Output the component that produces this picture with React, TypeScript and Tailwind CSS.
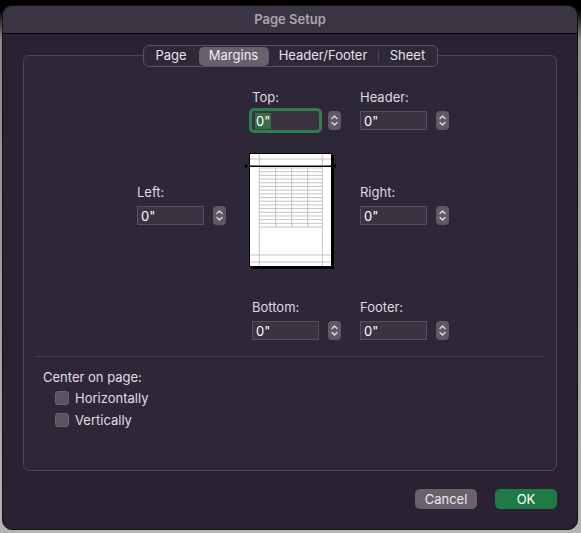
import React from "react";

const font = { fontFamily: "Inter, 'Noto Sans', 'Liberation Sans', sans-serif" };

function Stepper() {
  return (
    <div className="ml-[9px] w-[13px] h-[19px] rounded-[4px] bg-[#5e5965] flex items-center justify-center">
      <svg width="13" height="19" viewBox="0 0 13 19">
        <path d="M4 7.5 L6.5 5 L9 7.5" fill="none" stroke="#e4e0e8" strokeWidth="1.3" strokeLinecap="round" strokeLinejoin="round" />
        <path d="M4 11.5 L6.5 14 L9 11.5" fill="none" stroke="#e4e0e8" strokeWidth="1.3" strokeLinecap="round" strokeLinejoin="round" />
      </svg>
    </div>
  );
}

function Field({ label, focused = false }: { label: string; focused?: boolean }) {
  return (
    <div className="flex flex-col">
      <div className="text-[13px] leading-[16px] text-[#dedae2]">{label}</div>
      <div className="mt-[6px] flex items-center">
        {focused ? (
          <div className="w-[67px] h-[19px] bg-[#3a3342] rounded-[2px] shadow-[0_0_0_3px_#2e7f4d] flex items-center pl-[3px]">
            <span className="bg-[#3c6a4a] text-white text-[13px] leading-[16px] px-[1px]">0"</span>
          </div>
        ) : (
          <div className="w-[67px] h-[19px] bg-[#3a3342] border border-[#56505d] flex items-center pl-[3px]">
            <span className="text-white text-[13px] leading-[16px]">0"</span>
          </div>
        )}
        <Stepper />
      </div>
    </div>
  );
}

function Preview() {
  const rows = Array.from({ length: 17 }, (_, i) => 15 + i * 3.69);
  return (
    <svg width="86" height="117" viewBox="0 0 86 117" className="-ml-[3px] overflow-visible">
      <rect x="2" y="2" width="83" height="114" fill="#000" />
      <rect x="0.5" y="0.5" width="82" height="113" fill="#fff" stroke="#000" strokeWidth="1" />
      <g stroke="#bdbdbd" strokeWidth="0.9">
        <line x1="10.3" y1="1" x2="10.3" y2="113" />
        <line x1="73.3" y1="1" x2="73.3" y2="113" />
        <line x1="1" y1="6" x2="82" y2="6" />
        <line x1="1" y1="102" x2="82" y2="102" />
        <line x1="1" y1="109" x2="82" y2="109" />
        {rows.map((y, i) => (
          <line key={i} x1="10.3" y1={y} x2="73.3" y2={y} />
        ))}
        <line x1="26.7" y1="15" x2="26.7" y2="74" />
        <line x1="42.7" y1="15" x2="42.7" y2="74" />
        <line x1="58.7" y1="15" x2="58.7" y2="74" />
      </g>
      <line x1="0" y1="13.3" x2="83" y2="13.3" stroke="#000" strokeWidth="1.4" />
      <polygon points="-4,10.8 -1,13.3 -4,15.8" fill="#000" />
      <polygon points="87,10.8 84,13.3 87,15.8" fill="#000" />
    </svg>
  );
}

function Checkbox({ label }: { label: string }) {
  return (
    <div className="h-[22px] flex items-center pl-[12px]">
      <div className="w-[14px] h-[14px] rounded-[3px] bg-[#5a5460] border border-[#6a6470]" />
      <span className="ml-[6px] text-[13px] leading-[16px] text-[#e2dee6]">{label}</span>
    </div>
  );
}

export default function App() {
  return (
    <div
      className="w-[581px] h-[533px] bg-[linear-gradient(to_bottom,#000_0px,#000_10px,#8c8c8c_40px,#b4b4b4_100%)] pt-[5px] pl-[2px]"
      style={font}
    >
      <div className="w-[576px] h-[525px] rounded-[10px] overflow-hidden bg-[#2a2232] border border-[#111] flex flex-col">
        <div className="h-[28px] shrink-0 bg-[#3b3543] border-b border-black flex items-center justify-center pb-[2px]">
          <span className="text-[13px] font-semibold text-[#aaa5ae] leading-[16px]">Page Setup</span>
        </div>
        <div className="flex-1 flex flex-col px-[20px] pt-[21px]">
          <div className="h-[416px] border border-[#4b4553] rounded-[6px] bg-[#2e2737] flex flex-col">
            <div className="-mt-[11px] mx-auto flex items-center h-[22px] w-[295px] rounded-[6px] border border-[#59535f] bg-[#2f2838]">
              <div className="w-[55px] h-full flex items-center justify-center text-[13px] text-[#e6e2ea]">Page</div>
              <div className="w-[70px] h-[19px] rounded-[5px] bg-[#67616d] flex items-center justify-center text-[13px] text-[#f0ecf4]">Margins</div>
              <div className="w-[109px] h-full flex items-center justify-center text-[13px] text-[#e6e2ea]">Header/Footer</div>
              <div className="w-px h-[12px] bg-[#4d4755]" />
              <div className="flex-1 h-full flex items-center justify-center text-[13px] text-[#e6e2ea]">Sheet</div>
            </div>

            <div className="mt-[22px] pl-[113px] flex flex-col">
              <div className="flex">
                <div className="w-[115px]" />
                <div className="w-[108px]">
                  <Field label="Top:" focused />
                </div>
                <Field label="Header:" />
              </div>
              <div className="flex mt-[23px] items-start">
                <div className="w-[115px] pt-[31px]">
                  <Field label="Left:" />
                </div>
                <div className="w-[108px]">
                  <Preview />
                </div>
                <div className="pt-[31px]">
                  <Field label="Right:" />
                </div>
              </div>
              <div className="flex mt-[29px]">
                <div className="w-[115px]" />
                <div className="w-[108px]">
                  <Field label="Bottom:" />
                </div>
                <Field label="Footer:" />
              </div>
            </div>

            <div className="mt-[16px] mx-[12px] h-px bg-[#47414f]" />
            <div className="mt-[12px] pl-[19px] flex flex-col">
              <div className="text-[13px] leading-[16px] text-[#e2dee6]">Center on page:</div>
              <div className="mt-[2px]">
                <Checkbox label="Horizontally" />
                <Checkbox label="Vertically" />
              </div>
            </div>
          </div>
          <div className="mt-[18px] flex justify-end gap-[18px]">
            <button className="w-[62px] h-[20px] rounded-[5px] bg-[#67626b] text-[13px] text-[#eeeaf2] leading-[16px]">Cancel</button>
            <button className="w-[62px] h-[20px] rounded-[5px] bg-[#1f7b45] text-[13px] text-white leading-[16px]">OK</button>
          </div>
        </div>
      </div>
    </div>
  );
}
